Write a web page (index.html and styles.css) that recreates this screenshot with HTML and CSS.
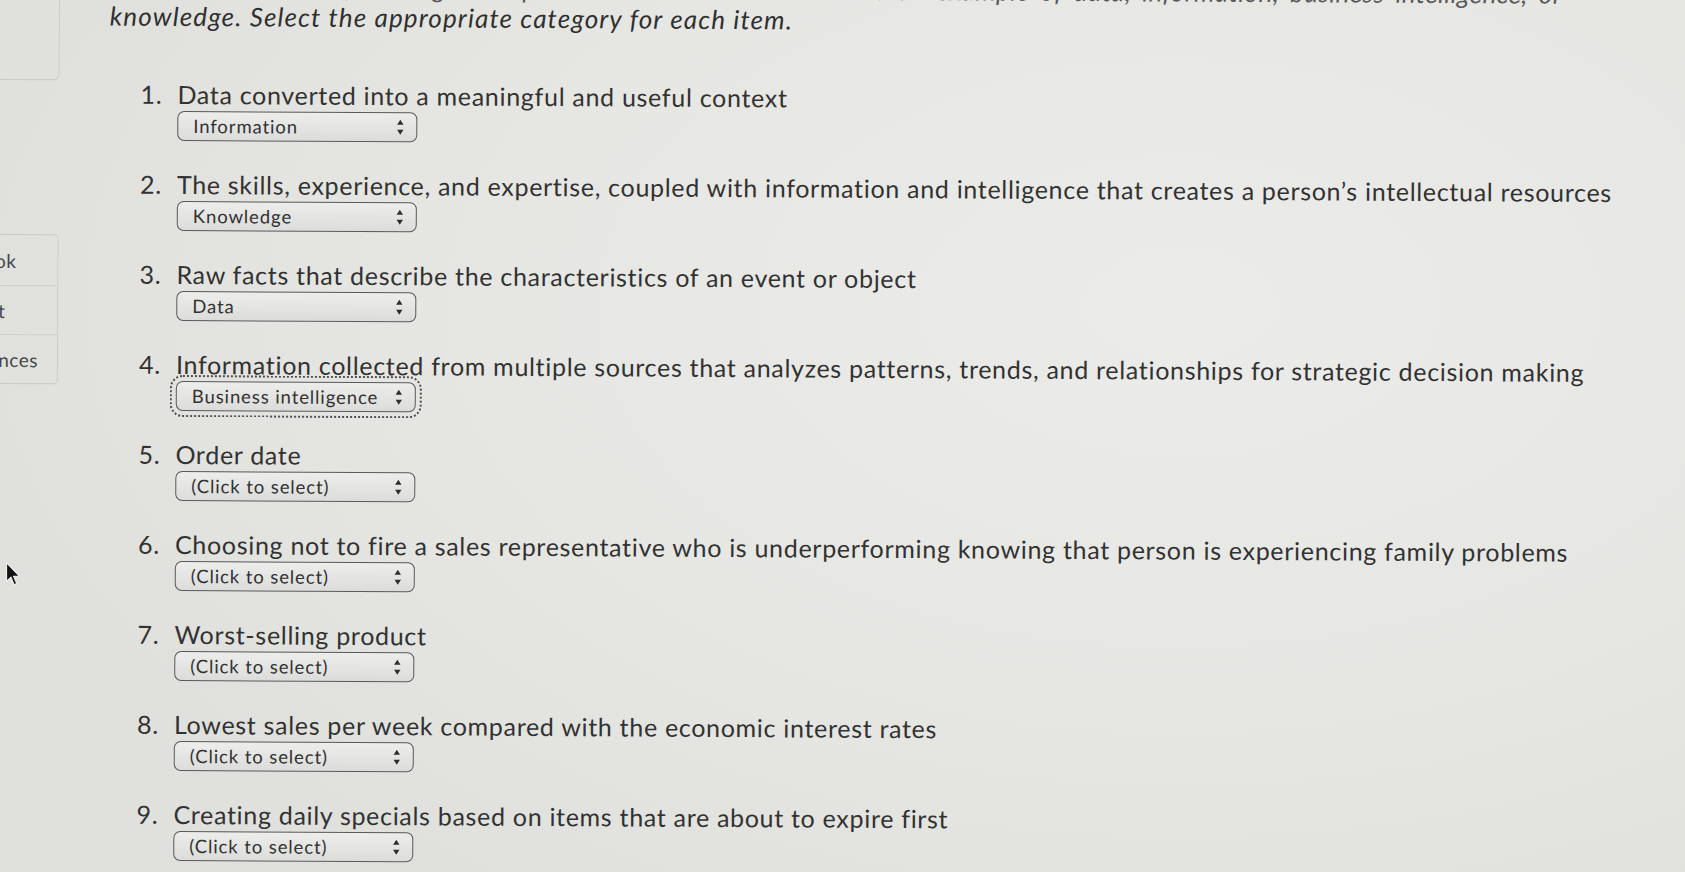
FILE: index.html
```html
<!DOCTYPE html>
<html lang="en">
<head>
<meta charset="utf-8">
<title>Categorize each item</title>
<link rel="stylesheet" href="styles.css">
</head>
<body>
<div class="screen">
  <aside class="sidebar">
    <div class="side-box"></div>
    <nav class="side-nav">
      <div class="nav-row nav-ebook"><span>eBook</span></div>
      <div class="nav-row nav-print"><span>Print</span></div>
      <div class="nav-row nav-refs"><span>References</span></div>
    </nav>
  </aside>
  <main class="content">
    <div class="intro">
      <p class="intro-line1">Review each of the following descriptions and decide whether it is an example of data, information, business intelligence, or</p>
      <p class="intro-line2">knowledge. Select the appropriate category for each item.</p>
    </div>
    <ol class="items">
      <li class="item">
        <span class="num">1.</span>
        <div class="body">
          <p class="prompt">Data converted into a meaningful and useful context</p>
          <div class="select"><span>Information</span><svg class="arrows" width="8" height="16" viewBox="0 0 8 16"><path d="M4 0.5 L7.2 5.5 L0.8 5.5 Z M4 15.5 L7.2 10.5 L0.8 10.5 Z"/></svg></div>
        </div>
      </li>
      <li class="item">
        <span class="num">2.</span>
        <div class="body">
          <p class="prompt">The skills, experience, and expertise, coupled with information and intelligence that creates a person’s intellectual resources</p>
          <div class="select"><span>Knowledge</span><svg class="arrows" width="8" height="16" viewBox="0 0 8 16"><path d="M4 0.5 L7.2 5.5 L0.8 5.5 Z M4 15.5 L7.2 10.5 L0.8 10.5 Z"/></svg></div>
        </div>
      </li>
      <li class="item">
        <span class="num">3.</span>
        <div class="body">
          <p class="prompt">Raw facts that describe the characteristics of an event or object</p>
          <div class="select"><span>Data</span><svg class="arrows" width="8" height="16" viewBox="0 0 8 16"><path d="M4 0.5 L7.2 5.5 L0.8 5.5 Z M4 15.5 L7.2 10.5 L0.8 10.5 Z"/></svg></div>
        </div>
      </li>
      <li class="item">
        <span class="num">4.</span>
        <div class="body">
          <p class="prompt">Information collected from multiple sources that analyzes patterns, trends, and relationships for strategic decision making</p>
          <div class="select focused"><span>Business intelligence</span><svg class="arrows" width="8" height="16" viewBox="0 0 8 16"><path d="M4 0.5 L7.2 5.5 L0.8 5.5 Z M4 15.5 L7.2 10.5 L0.8 10.5 Z"/></svg></div>
        </div>
      </li>
      <li class="item">
        <span class="num">5.</span>
        <div class="body">
          <p class="prompt">Order date</p>
          <div class="select"><span>(Click to select)</span><svg class="arrows" width="8" height="16" viewBox="0 0 8 16"><path d="M4 0.5 L7.2 5.5 L0.8 5.5 Z M4 15.5 L7.2 10.5 L0.8 10.5 Z"/></svg></div>
        </div>
      </li>
      <li class="item">
        <span class="num">6.</span>
        <div class="body">
          <p class="prompt">Choosing not to fire a sales representative who is underperforming knowing that person is experiencing family problems</p>
          <div class="select"><span>(Click to select)</span><svg class="arrows" width="8" height="16" viewBox="0 0 8 16"><path d="M4 0.5 L7.2 5.5 L0.8 5.5 Z M4 15.5 L7.2 10.5 L0.8 10.5 Z"/></svg></div>
        </div>
      </li>
      <li class="item">
        <span class="num">7.</span>
        <div class="body">
          <p class="prompt">Worst-selling product</p>
          <div class="select"><span>(Click to select)</span><svg class="arrows" width="8" height="16" viewBox="0 0 8 16"><path d="M4 0.5 L7.2 5.5 L0.8 5.5 Z M4 15.5 L7.2 10.5 L0.8 10.5 Z"/></svg></div>
        </div>
      </li>
      <li class="item">
        <span class="num">8.</span>
        <div class="body">
          <p class="prompt">Lowest sales per week compared with the economic interest rates</p>
          <div class="select"><span>(Click to select)</span><svg class="arrows" width="8" height="16" viewBox="0 0 8 16"><path d="M4 0.5 L7.2 5.5 L0.8 5.5 Z M4 15.5 L7.2 10.5 L0.8 10.5 Z"/></svg></div>
        </div>
      </li>
      <li class="item">
        <span class="num">9.</span>
        <div class="body">
          <p class="prompt">Creating daily specials based on items that are about to expire first</p>
          <div class="select"><span>(Click to select)</span><svg class="arrows" width="8" height="16" viewBox="0 0 8 16"><path d="M4 0.5 L7.2 5.5 L0.8 5.5 Z M4 15.5 L7.2 10.5 L0.8 10.5 Z"/></svg></div>
        </div>
      </li>
    </ol>
  </main>
</div>
<svg class="cursor" width="17" height="26" viewBox="0 0 16 24"><path d="M1.5 1.5 L1.5 19 L5.6 15 L8.6 22 L11 21 L8.1 14.2 L13.8 14.2 Z" fill="#111" stroke="#f2f2f2" stroke-width="1"/></svg>
</body>
</html>
```

FILE: styles.css
```css
html, body {
  margin: 0;
  padding: 0;
}

body {
  width: 1685px;
  height: 872px;
  overflow: hidden;
  position: relative;
  background: radial-gradient(ellipse 1200px 700px at 70% 35%, #ebebe9 0%, #e6e6e3 60%, #e0e0dd 100%);
  font-family: Lato, "Noto Sans", "Liberation Sans", sans-serif;
  color: #323232;
}

.screen {
  display: flex;
  transform: rotate(0.32deg);
  transform-origin: 0 0;
}

/* left sidebar (mostly off-screen) */
.sidebar {
  width: 60px;
  flex-shrink: 0;
  overflow: hidden;
  display: flex;
  flex-direction: column;
}

.side-box {
  box-sizing: border-box;
  width: 80px;
  height: 82px;
  margin: -2px 0 0 -20px;
  border: 1px solid #c9c9c6;
  border-radius: 0 0 6px 0;
}

.side-nav {
  box-sizing: border-box;
  width: 80px;
  margin: 154px 0 0 -20px;
  border: 1px solid #c9c9c6;
  border-radius: 0 5px 5px 0;
}

.nav-row {
  height: 48px;
  display: flex;
  align-items: center;
  justify-content: flex-end;
  overflow: hidden;
  white-space: nowrap;
  font-size: 19px;
  letter-spacing: 0.5px;
  color: #474747;
  border-top: 1px solid #cfcfcc;
}

.nav-row span {
  flex-shrink: 0;
}

.nav-row:first-child {
  border-top: none;
  height: 50px;
}

.nav-ebook { padding-right: 41px; }
.nav-print { padding-right: 52px; }
.nav-refs  { padding-right: 19px; }

/* main content */
.content {
  flex: 1;
  padding-left: 50px;
}

.intro {
  margin-top: -30px;
  font-style: italic;
  font-size: 26px;
  line-height: 30px;
  letter-spacing: 1.15px;
  color: #303030;
}

.intro p {
  margin: 0;
  white-space: nowrap;
}

.intro-line1 {
  width: 1452px;
  white-space: normal;
  text-align: justify;
  text-align-last: justify;
  letter-spacing: 0.4px;
  color: #5a5a5a;
}

.items {
  list-style: none;
  margin: 49px 0 0;
  padding: 0;
}

.item {
  display: grid;
  grid-template-columns: 53px 1fr;
  column-gap: 15px;
  margin-bottom: 29px;
}

.num {
  text-align: right;
  font-size: 25px;
  line-height: 28px;
  letter-spacing: 0.7px;
}

.prompt {
  margin: 0;
  font-size: 25px;
  line-height: 28px;
  letter-spacing: 0.7px;
  white-space: nowrap;
}

.select {
  box-sizing: border-box;
  margin-top: 3px;
  width: 240px;
  height: 30px;
  display: flex;
  align-items: center;
  justify-content: space-between;
  padding: 0 12px 0 15px;
  border: 1.5px solid #5a5a5a;
  border-radius: 7px;
  background: linear-gradient(#ededeb, #dcdcda);
  font-size: 18.5px;
  letter-spacing: 0.9px;
  color: #323232;
}

.select.focused {
  outline: 2px dotted #4e4e4e;
  outline-offset: 4px;
}

.arrows {
  fill: #2e2e2e;
}

.cursor {
  position: absolute;
  left: 5px;
  top: 561px;
}
```
